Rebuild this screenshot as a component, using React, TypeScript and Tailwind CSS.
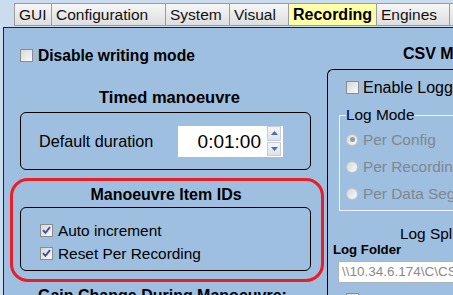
import React from "react";

const Check = ({ checked = false }: { checked?: boolean }) => (
  <span className="inline-flex w-[13px] h-[13px] shrink-0 items-center justify-center border border-[#8c8c8c] bg-gradient-to-br from-[#d6d6d6] to-[#fbfbfb]">
    {checked && (
      <svg width="9" height="9" viewBox="0 0 9 9">
        <path d="M1 4.2 L3.4 6.8 L8 1.2" stroke="#3c4fa0" strokeWidth="1.9" fill="none" />
      </svg>
    )}
  </span>
);

const Radio = ({ checked = false }: { checked?: boolean }) => (
  <span className="inline-flex w-[12px] h-[12px] shrink-0 items-center justify-center rounded-full border border-[#c0c6cc] bg-gradient-to-br from-[#d8d8d8] to-[#fafafa]">
    {checked && <span className="w-[5px] h-[5px] rounded-full bg-[#9a9a9a]" />}
  </span>
);

const tabs: { label: string; w: string; active?: boolean }[] = [
  { label: "GUI", w: "w-[37px]" },
  { label: "Configuration", w: "w-[114px]" },
  { label: "System", w: "w-[64px]" },
  { label: "Visual", w: "w-[59px]" },
  { label: "Recording", w: "w-[88px]", active: true },
  { label: "Engines", w: "w-[73px]" },
  { label: "", w: "w-[20px]" },
];

export default function App() {
  return (
    <div className="w-[453px] h-[295px] overflow-hidden bg-[#cbdcee] text-black font-['Liberation_Sans',Arial,sans-serif]">
      {/* tab strip */}
      <div className="flex h-[27px] pt-[3px] pl-[14px]">
        <div className="flex h-[23px] border-l border-[#9c9c9c]">
          {tabs.map((t, i) => (
            <div
              key={i}
              className={`${t.w} shrink-0 h-[23px] border-t border-r border-b border-[#9c9c9c] flex items-center pl-[4px] whitespace-nowrap ${
                t.active
                  ? "bg-[#ffffa6] font-bold text-[16px]"
                  : "bg-gradient-to-b from-[#f6f6f6] to-[#dedede] text-[15.5px] text-[#111]"
              }`}
            >
              {t.label}
            </div>
          ))}
        </div>
      </div>

      {/* panel */}
      <div className="ml-[3px] h-[268px] border-l border-t border-[#222] bg-[#9ebfdf] flex">
        {/* left column */}
        <div className="w-[323px] shrink-0 flex flex-col">
          <div className="shrink-0 mt-[19px] h-[17px] flex items-center pl-[16px] gap-[5px]">
            <Check />
            <span className="font-bold text-[15.6px] whitespace-nowrap">Disable writing mode</span>
          </div>

          <div className="shrink-0 mt-[23px] h-[20px] flex items-center justify-center pl-[8px] font-bold text-[16.5px] whitespace-nowrap">
            Timed manoeuvre
          </div>

          <div className="shrink-0 mt-[5px] ml-[16px] w-[291px] h-[58px] border border-black rounded-[6px] flex items-center pl-[18px]">
            <span className="text-[16.2px] whitespace-nowrap">Default duration</span>
            <div className="ml-auto mr-[27px] w-[105px] h-[31px] bg-white flex items-center">
              <span className="flex-1 text-right pr-[6px] text-[19px] leading-none">0:01:00</span>
              <div className="w-[14px] h-[30px] mr-[2px] flex flex-col gap-[1px]">
                <div className="flex-1 border border-[#c4cdd8] bg-gradient-to-b from-[#f4f4f4] to-[#dfe3e8] flex items-center justify-center">
                  <svg width="7" height="4" viewBox="0 0 7 4">
                    <path d="M0 4 L3.5 0 L7 4 Z" fill="#4d6cb8" />
                  </svg>
                </div>
                <div className="flex-1 border border-[#c4cdd8] bg-gradient-to-b from-[#f4f4f4] to-[#dfe3e8] flex items-center justify-center">
                  <svg width="7" height="4" viewBox="0 0 7 4">
                    <path d="M0 0 L3.5 4 L7 0 Z" fill="#4d6cb8" />
                  </svg>
                </div>
              </div>
            </div>
          </div>

          {/* highlighted section */}
          <div className="shrink-0 mt-[8px] ml-[6px] w-[314px] h-[104px] border-[3px] border-[#ee1c25] rounded-[18px] flex flex-col">
            <div className="shrink-0 mt-[4px] h-[20px] flex items-center justify-center font-bold text-[16px] whitespace-nowrap pr-[2px]">
              Manoeuvre Item IDs
            </div>
            <div className="shrink-0 mt-[2px] ml-[7px] w-[291px] h-[64px] border border-black rounded-[6px] flex flex-col pt-[11px] pl-[19px]">
              <div className="shrink-0 h-[23px] flex items-center gap-[5px]">
                <Check checked />
                <span className="text-[15.4px] whitespace-nowrap">Auto increment</span>
              </div>
              <div className="shrink-0 h-[23px] flex items-center gap-[5px]">
                <Check checked />
                <span className="text-[15.4px] whitespace-nowrap">Reset Per Recording</span>
              </div>
            </div>
          </div>

          <div className="shrink-0 mt-[4px] h-[20px] flex items-center pl-[34px] font-bold text-[16px] whitespace-nowrap">
            Gain Change During Manoeuvre:
          </div>
        </div>

        {/* right column */}
        <div className="flex-1 min-w-0 flex flex-col">
          <div className="shrink-0 mt-[16px] h-[20px] flex items-center pl-[76px] font-bold text-[16px] whitespace-nowrap">
            CSV Management
          </div>
          <div className="shrink-0 mt-[5px] w-[200px] h-[300px] border-l border-t border-black rounded-tl-[6px] flex flex-col">
            <div className="shrink-0 mt-[9px] h-[17px] flex items-center pl-[18px] gap-[4px]">
              <Check />
              <span className="text-[16px] whitespace-nowrap">Enable Logging</span>
            </div>

            <fieldset className="shrink-0 mt-[10px] ml-[11px] w-[200px] border border-[#eef3f8] px-[6px] pb-[3px]">
              <legend className="text-[15.4px] leading-[18px] px-0 text-black whitespace-nowrap">Log Mode</legend>
              <div className="mt-[2px] h-[27px] flex items-center gap-[5px]">
                <Radio checked />
                <span className="text-[15.4px] text-[#7e8792] whitespace-nowrap">Per Config</span>
              </div>
              <div className="h-[27px] flex items-center gap-[5px]">
                <Radio />
                <span className="text-[15.4px] text-[#7e8792] whitespace-nowrap">Per Recording</span>
              </div>
              <div className="h-[27px] flex items-center gap-[5px]">
                <Radio />
                <span className="text-[15.4px] text-[#7e8792] whitespace-nowrap">Per Data Segment</span>
              </div>
            </fieldset>

            <div className="shrink-0 mt-[15px] h-[16px] flex items-center pl-[72px] text-[15.4px] whitespace-nowrap">
              Log Split
            </div>
            <div className="shrink-0 h-[16px] flex items-center pl-[5px] font-bold text-[13.2px] whitespace-nowrap">
              Log Folder
            </div>
            <div className="shrink-0 mt-[3px] ml-[10px] w-[200px] h-[22px] bg-white border border-[#a9b4bf] flex items-center pl-[3px] text-[13.5px] text-[#8a8a8a] whitespace-nowrap overflow-hidden">
              {"\\\\10.34.6.174\\C\\CSV\\Logs"}
            </div>
            <div className="shrink-0 mt-[6px] ml-[18px]">
              <Check />
            </div>
          </div>
        </div>
      </div>
    </div>
  );
}
